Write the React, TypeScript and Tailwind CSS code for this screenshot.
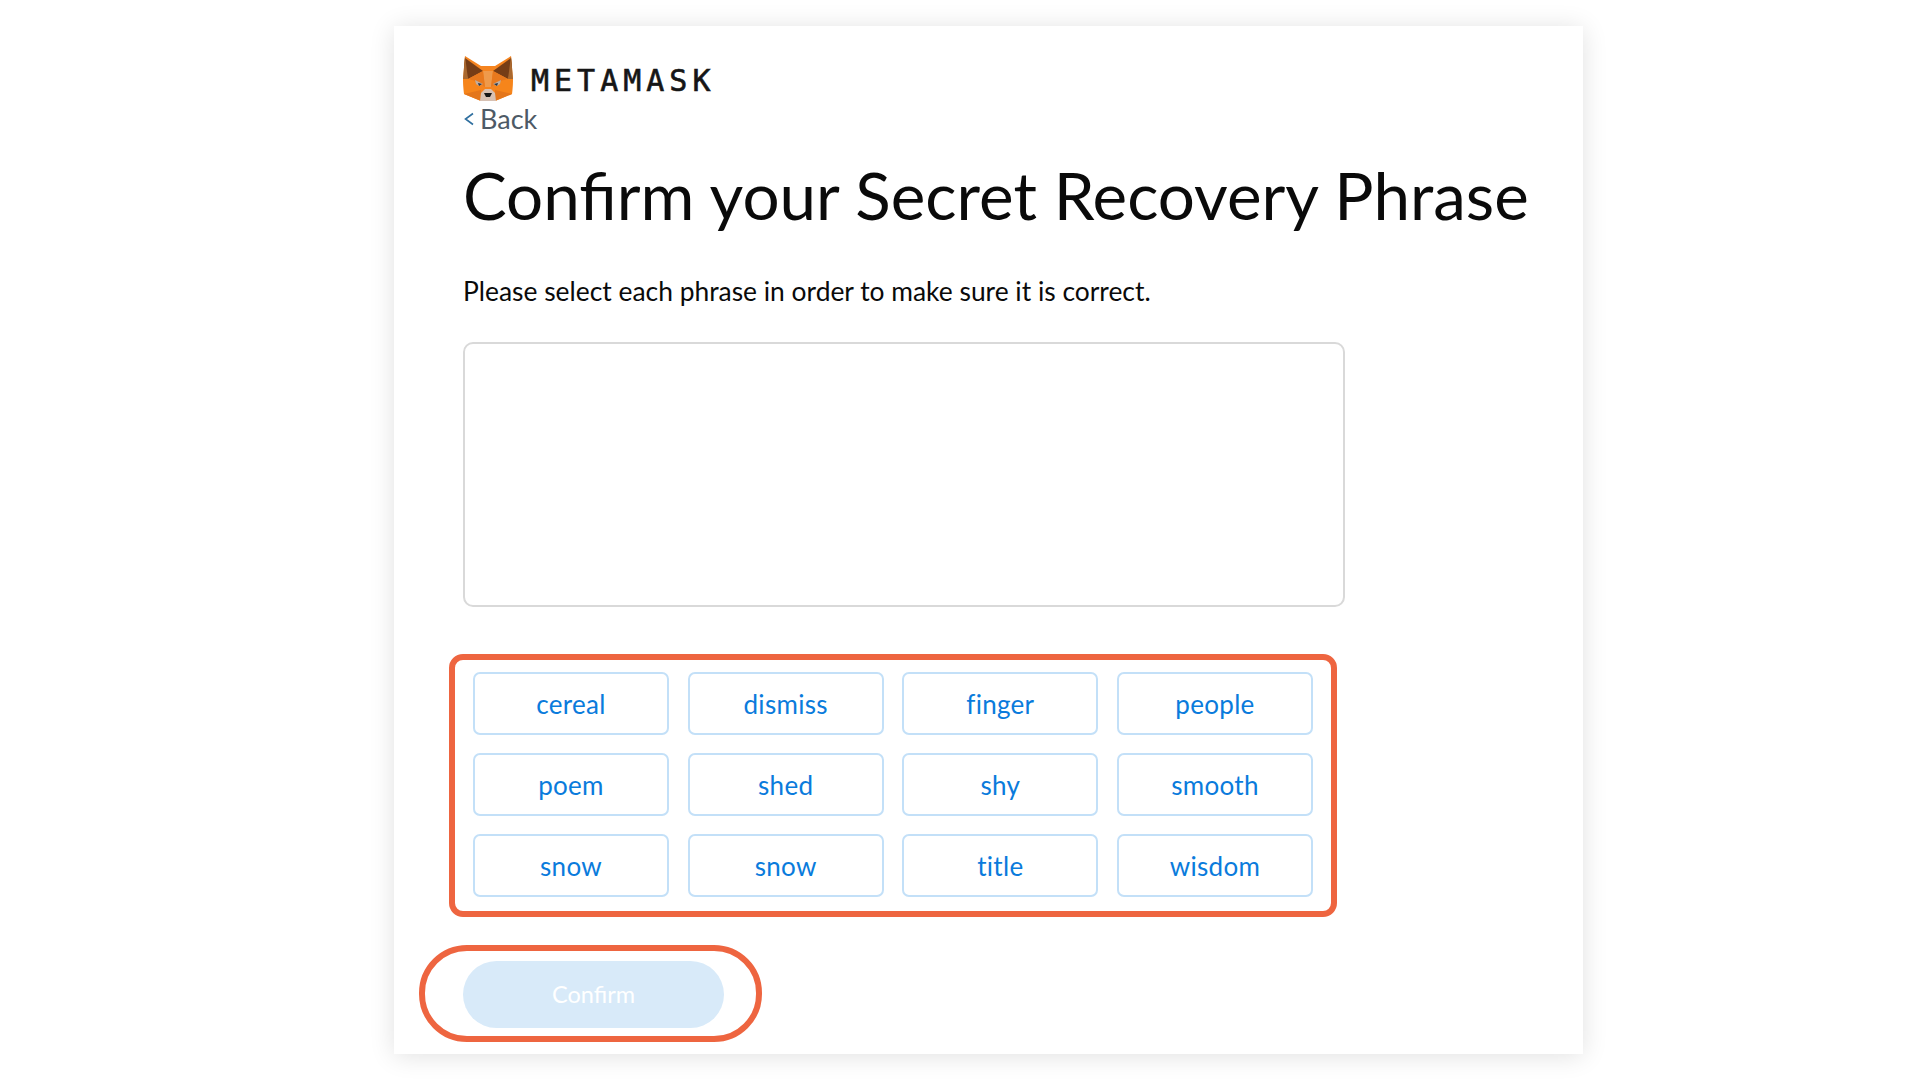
const WORDS = ["cereal", "dismiss", "finger", "people", "poem", "shed", "shy", "smooth", "snow", "snow", "title", "wisdom"];

function Fox() {
  return (
    <svg viewBox="0 0 50 46" className="w-[50px] h-[46px] shrink-0">
      {/* head */}
      <polygon points="2,0 18,10 32,10 48,0 50,23 49,38 32,45 18,45 1,38 0,23" fill="#f5841f" />
      <polygon points="2,2 20,15 5,23 1,11" fill="#763d16" />
      <polygon points="48,2 30,15 45,23 49,11" fill="#763d16" />
      <polygon points="2,0 5,23 0,23" fill="#a9682f" />
      <polygon points="48,0 45,23 50,23" fill="#a9682f" />
      {/* forehead and cheeks */}
      <polygon points="20,15 30,15 28,31 22,31" fill="#ef9a4b" />
      <polygon points="5,23 20,15 22,31 15,26" fill="#e8791e" />
      <polygon points="45,23 30,15 28,31 35,26" fill="#e8791e" />
      <polygon points="0,23 5,23 15,26 18,34 1,38" fill="#f6851b" />
      <polygon points="50,23 45,23 35,26 32,34 49,38" fill="#f6851b" />
      <polygon points="1,38 18,34 18,45" fill="#e4761b" />
      <polygon points="49,38 32,34 32,45" fill="#e4761b" />
      {/* eyes */}
      <polygon points="12,24 20,28 16,30 13,28" fill="#c0ad9e" />
      <polygon points="38,24 30,28 34,30 37,28" fill="#c0ad9e" />
      <polygon points="15,27 19,28 16,30" fill="#233447" />
      <polygon points="35,27 31,28 34,30" fill="#233447" />
      {/* muzzle */}
      <polygon points="18,37 22,33 28,33 32,37 33,45 17,45" fill="#d7c1b3" />
      <polygon points="21,37 29,37 27,41 23,41" fill="#161616" />
    </svg>
  );
}

export default function App() {
  return (
    <div className="w-[1920px] h-[1080px] bg-white overflow-hidden pt-[26px] font-['Lato','Liberation_Sans',sans-serif]">
      <div className="ml-[394px] w-[1189px] h-[1028px] bg-white shadow-[0_2px_24px_rgba(0,0,0,0.12)] pl-[69px] pt-[30px]">
        <div className="flex items-center gap-[18px] h-[46px]">
          <Fox />
          <span className="font-['DejaVu_Sans_Mono',monospace] text-[30px] tracking-[5px] text-[#161616] leading-none pt-[3px] [-webkit-text-stroke:0.6px_#161616]">METAMASK</span>
        </div>
        <div className="text-[27px] leading-[30px] mt-[2px] text-[#4d5a66] flex items-center gap-[6px] h-[30px]">
          <svg viewBox="0 0 10 14" className="w-[10px] h-[14px] shrink-0 ml-[1px]" fill="none" stroke="#2f6f9f" strokeWidth="1.6">
            <path d="M9 1.5 L1.5 7 L9 12.5" />
          </svg>
          <span>Back</span>
        </div>
        <h1 className="text-[65.5px] leading-[80px] mt-[21px] text-[#0a0a0a] font-normal whitespace-nowrap">Confirm your Secret Recovery Phrase</h1>
        <p className="text-[26.4px] leading-[30px] mt-[41px] text-[#0a0a0a]">Please select each phrase in order to make sure it is correct.</p>
        <div className="w-[882px] h-[265px] mt-[36px] border-2 border-[#d9d9d9] rounded-[10px]" />
        <div className="w-[888px] h-[263px] ml-[-14px] mt-[47px] border-[6px] border-[#ee6540] rounded-[14px] pl-[18px] pt-[12px]">
          <div className="grid grid-cols-[196px_196px_196px_196px] auto-rows-[63px] gap-x-[18.67px] gap-y-[18px]">
            {WORDS.map((w, i) => (
              <button key={i} className="border-2 border-[#c3e0f8] rounded-[7px] text-[#0a7bdc] text-[26px] tracking-[0.3px] leading-none flex items-center justify-center">{w}</button>
            ))}
          </div>
        </div>
        <div className="w-[343px] h-[97px] ml-[-44px] mt-[28px] border-[6px] border-[#ee6540] rounded-[48px] pl-[38px] pt-[10px]">
          <button className="w-[261px] h-[67px] rounded-[34px] bg-[#d8eaf9] text-white text-[23.5px] flex items-center justify-center">Confirm</button>
        </div>
      </div>
    </div>
  );
}
